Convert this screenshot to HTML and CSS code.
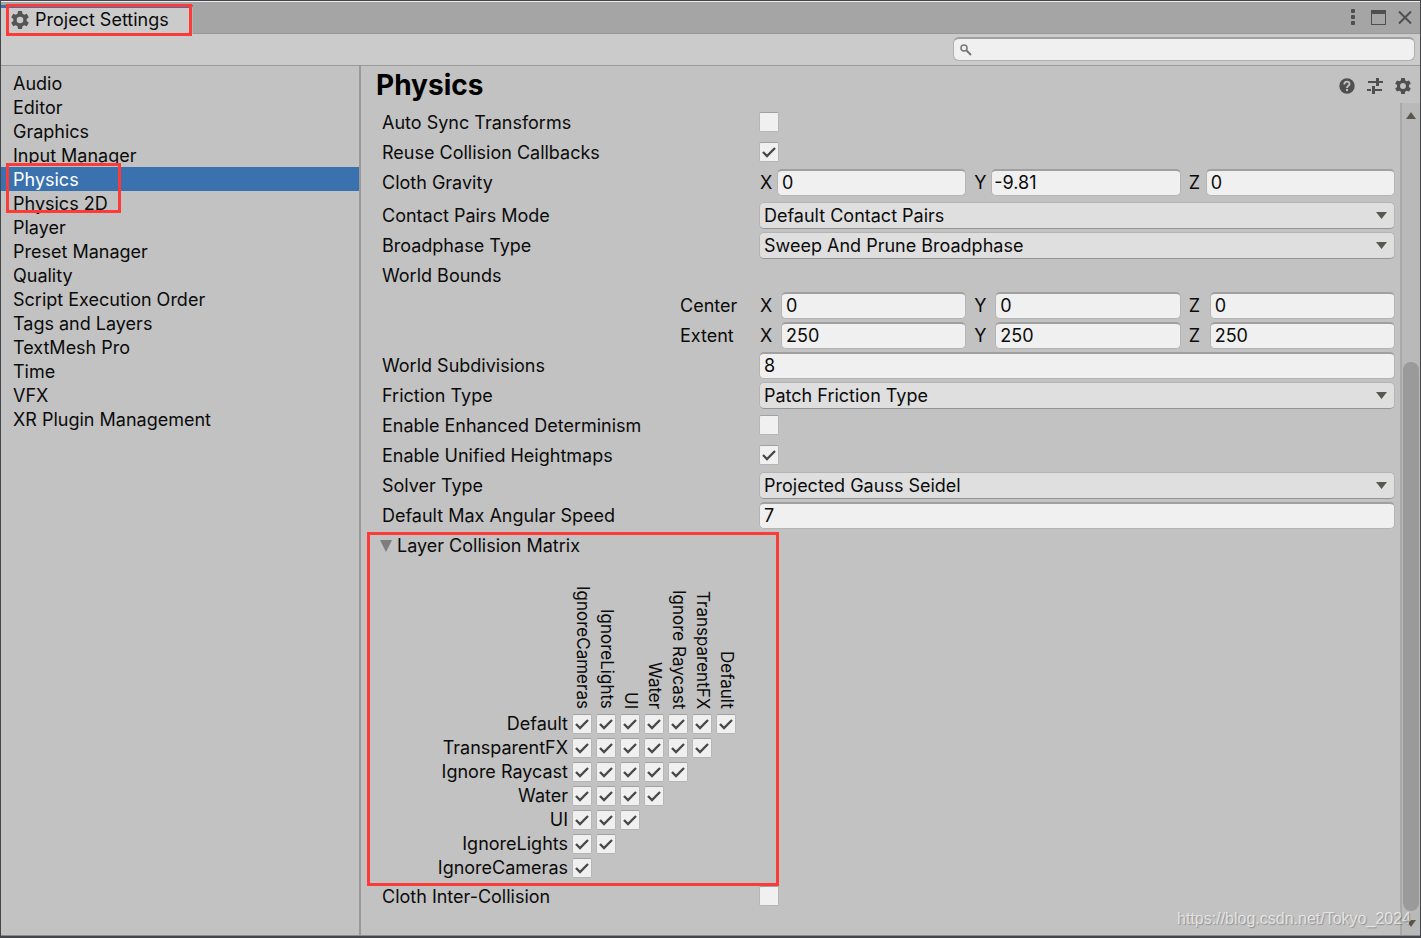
FILE: index.html
```html
<!DOCTYPE html>
<html lang="en">
<head>
<meta charset="utf-8">
<title>Project Settings</title>
<link rel="stylesheet" href="styles.css">
</head>
<body>
<svg class="defs" aria-hidden="true">
  <symbol id="gear" viewBox="0 0 18 18">
    <path fill="currentColor" fill-rule="evenodd" d="M7 0h4l.5 2.700 1.700 1 2.600-1 2 3.500-2.100 1.800v2l2.100 1.800-2 3.500-2.600-1-1.700 1L11 18H7l-.5-2.700-1.700-1-2.600 1-2-3.500L2.300 10V8L.2 6.200l2-3.500 2.600 1 1.700-1zM9 5.700a3.300 3.300 0 1 0 0 6.600 3.300 3.300 0 0 0 0-6.600z"/>
  </symbol>
</svg>
<div class="window">
  <header class="tabbar">
    <div class="tab">
      <svg class="tab-icon" aria-hidden="true"><use href="#gear"/></svg>
      <span>Project Settings</span>
      <i class="mark mark-tab"></i>
    </div>
    <div class="window-buttons">
      <button class="icon-button" aria-label="Menu"><svg width="16" height="16" viewBox="0 0 16 16"><g fill="currentColor"><rect x="6" y="0" width="4" height="4" rx="1"/><rect x="6" y="6" width="4" height="4" rx="1"/><rect x="6" y="12" width="4" height="4" rx="1"/></g></svg></button>
      <button class="icon-button" aria-label="Maximize"><svg width="16" height="16" viewBox="0 0 16 16"><path fill="currentColor" fill-rule="evenodd" d="M0 1h15v15H0zM1 5v10h13V5z"/></svg></button>
      <button class="icon-button" aria-label="Close"><svg width="16" height="16" viewBox="0 0 16 16"><path fill="none" stroke="currentColor" stroke-width="2" d="M2 2.500 14 14.500M14 2.500 2 14.500"/></svg></button>
    </div>
  </header>
  <div class="toolbar">
    <label class="search">
      <svg width="12" height="12" viewBox="0 0 12 12" aria-hidden="true"><circle cx="4" cy="4" r="3" fill="none" stroke="currentColor" stroke-width="1.500"/><path stroke="currentColor" stroke-width="2" d="M6.300 6.300 11 11"/></svg>
      <input type="search" aria-label="Search settings">
    </label>
  </div>
  <div class="panes">
    <nav class="sidebar">
      <a href="#">Audio</a>
      <a href="#">Editor</a>
      <a href="#">Graphics</a>
      <a href="#">Input Manager</a>
      <a href="#" class="selected" aria-current="page">Physics<i class="mark mark-nav"></i></a>
      <a href="#">Physics 2D</a>
      <a href="#">Player</a>
      <a href="#">Preset Manager</a>
      <a href="#">Quality</a>
      <a href="#">Script Execution Order</a>
      <a href="#">Tags and Layers</a>
      <a href="#">TextMesh Pro</a>
      <a href="#">Time</a>
      <a href="#">VFX</a>
      <a href="#">XR Plugin Management</a>
    </nav>
    <main class="content">
      <div class="heading">
        <h1>Physics</h1>
        <div class="heading-buttons">
          <button class="icon-button" aria-label="Help"><svg width="16" height="16" viewBox="0 0 16 16"><circle cx="8" cy="8" r="7.700" fill="currentColor"/><path fill="none" stroke="#c2c2c2" stroke-width="1.900" d="M5.300 6.500C5.300 2.700 10.700 2.900 10.500 6.100 10.400 7.900 8 7.900 8 10"/><path fill="#c2c2c2" d="M7 11h2v2H7z"/></svg></button>
          <button class="icon-button" aria-label="Presets"><svg width="16" height="16" viewBox="0 0 16 16"><path fill="none" stroke="currentColor" stroke-width="2" d="M1 4H9M10 4H16M0 12H4M6 12H15"/><path fill="none" stroke="currentColor" stroke-width="3" d="M10.500 0v8M6.500 8v8"/></svg></button>
          <button class="icon-button" aria-label="Options"><svg width="16" height="16"><use href="#gear"/></svg></button>
        </div>
      </div>
      <div class="scroll">
        <form class="settings">
          <div class="row"><label for="autosync">Auto Sync Transforms</label><input type="checkbox" id="autosync"></div>
          <div class="row"><label for="reuse">Reuse Collision Callbacks</label><input type="checkbox" id="reuse" checked></div>
          <div class="row spaced"><span>Cloth Gravity</span>
            <div class="vector">
              <label>X<input type="text" value="0"></label>
              <label>Y<input class="tight" type="text" value="-9.81"></label>
              <label>Z<input type="text" value="0"></label>
            </div>
          </div>
          <div class="row"><label for="pairs">Contact Pairs Mode</label><select id="pairs"><option>Default Contact Pairs</option></select></div>
          <div class="row"><label for="broad">Broadphase Type</label><select id="broad"><option>Sweep And Prune Broadphase</option></select></div>
          <div class="row"><span>World Bounds</span></div>
          <div class="row"><span class="sub">Center</span>
            <div class="vector wide">
              <label>X<input type="text" value="0"></label>
              <label>Y<input type="text" value="0"></label>
              <label>Z<input type="text" value="0"></label>
            </div>
          </div>
          <div class="row"><span class="sub">Extent</span>
            <div class="vector wide">
              <label>X<input type="text" value="250"></label>
              <label>Y<input type="text" value="250"></label>
              <label>Z<input type="text" value="250"></label>
            </div>
          </div>
          <div class="row"><label for="subdiv">World Subdivisions</label><input type="text" id="subdiv" value="8"></div>
          <div class="row"><label for="friction">Friction Type</label><select id="friction"><option>Patch Friction Type</option></select></div>
          <div class="row"><label for="determinism">Enable Enhanced Determinism</label><input type="checkbox" id="determinism"></div>
          <div class="row"><label for="heightmaps">Enable Unified Heightmaps</label><input type="checkbox" id="heightmaps" checked></div>
          <div class="row"><label for="solver">Solver Type</label><select id="solver"><option>Projected Gauss Seidel</option></select></div>
          <div class="row"><label for="angular">Default Max Angular Speed</label><input type="text" id="angular" value="7"></div>
          <section class="matrix-group">
            <i class="mark mark-matrix"></i>
            <button type="button" class="foldout" aria-expanded="true"><svg width="12" height="12" viewBox="0 0 12 12" aria-hidden="true"><path fill="#7d7d7d" d="M0 0h12L6 12z"/></svg>Layer Collision Matrix</button>
            <table class="matrix">
              <thead>
                <tr><td></td><th scope="col"><span>IgnoreCameras</span></th><th scope="col"><span>IgnoreLights</span></th><th scope="col"><span>UI</span></th><th scope="col"><span>Water</span></th><th scope="col"><span>Ignore Raycast</span></th><th scope="col"><span>TransparentFX</span></th><th scope="col"><span>Default</span></th></tr>
              </thead>
              <tbody>
                <tr><th scope="row">Default</th><td><input type="checkbox" aria-label="Default / IgnoreCameras" checked></td><td><input type="checkbox" aria-label="Default / IgnoreLights" checked></td><td><input type="checkbox" aria-label="Default / UI" checked></td><td><input type="checkbox" aria-label="Default / Water" checked></td><td><input type="checkbox" aria-label="Default / Ignore Raycast" checked></td><td><input type="checkbox" aria-label="Default / TransparentFX" checked></td><td><input type="checkbox" aria-label="Default / Default" checked></td></tr>
                <tr><th scope="row">TransparentFX</th><td><input type="checkbox" aria-label="TransparentFX / IgnoreCameras" checked></td><td><input type="checkbox" aria-label="TransparentFX / IgnoreLights" checked></td><td><input type="checkbox" aria-label="TransparentFX / UI" checked></td><td><input type="checkbox" aria-label="TransparentFX / Water" checked></td><td><input type="checkbox" aria-label="TransparentFX / Ignore Raycast" checked></td><td><input type="checkbox" aria-label="TransparentFX / TransparentFX" checked></td></tr>
                <tr><th scope="row">Ignore Raycast</th><td><input type="checkbox" aria-label="Ignore Raycast / IgnoreCameras" checked></td><td><input type="checkbox" aria-label="Ignore Raycast / IgnoreLights" checked></td><td><input type="checkbox" aria-label="Ignore Raycast / UI" checked></td><td><input type="checkbox" aria-label="Ignore Raycast / Water" checked></td><td><input type="checkbox" aria-label="Ignore Raycast / Ignore Raycast" checked></td></tr>
                <tr><th scope="row">Water</th><td><input type="checkbox" aria-label="Water / IgnoreCameras" checked></td><td><input type="checkbox" aria-label="Water / IgnoreLights" checked></td><td><input type="checkbox" aria-label="Water / UI" checked></td><td><input type="checkbox" aria-label="Water / Water" checked></td></tr>
                <tr><th scope="row">UI</th><td><input type="checkbox" aria-label="UI / IgnoreCameras" checked></td><td><input type="checkbox" aria-label="UI / IgnoreLights" checked></td><td><input type="checkbox" aria-label="UI / UI" checked></td></tr>
                <tr><th scope="row">IgnoreLights</th><td><input type="checkbox" aria-label="IgnoreLights / IgnoreCameras" checked></td><td><input type="checkbox" aria-label="IgnoreLights / IgnoreLights" checked></td></tr>
                <tr><th scope="row">IgnoreCameras</th><td><input type="checkbox" aria-label="IgnoreCameras / IgnoreCameras" checked></td></tr>
              </tbody>
            </table>
          </section>
          <div class="row"><label for="inter">Cloth Inter-Collision</label><input type="checkbox" id="inter"></div>
        </form>
        <div class="scrollbar">
          <button class="arrow" aria-label="Scroll up"><svg width="10" height="7" viewBox="0 0 10 7"><path fill="#585850" d="M5 0l5 7H0z"/></svg></button>
          <div class="track"><div class="thumb"></div></div>
          <button class="arrow" aria-label="Scroll down"><svg width="10" height="7" viewBox="0 0 10 7"><path fill="#585850" d="M0 0h10L5 7z"/></svg></button>
        </div>
      </div>
    </main>
  </div>
</div>
<div class="watermark">https://blog.csdn.net/Tokyo_2024</div>
</body>
</html>
```
FILE: styles.css
```css
* { box-sizing: border-box; }

body {
  margin: 0;
  height: 100vh;
  padding: 1px 1px 2px;
  background: #45464b;
  color: #0b0b0b;
  font: 18px/24px Inter, "Liberation Sans", sans-serif;
}

button, input, select { font: inherit; color: inherit; margin: 0; }
.defs { position: absolute; width: 0; height: 0; }

.window {
  display: flex;
  flex-direction: column;
  height: 100%;
  border-top: 1px solid #ececec;
  border-bottom: 1px solid #8a8a8a;
  background: #c2c2c2;
}

/* Title tabs */
.tabbar {
  display: flex;
  justify-content: space-between;
  align-items: flex-end;
  height: 32px;
  flex: none;
  background: #a5a5a5;
  box-shadow: inset 0 -1px #999;
}
.tab {
  position: relative;
  display: flex;
  align-items: center;
  gap: 6px;
  height: 29px;
  padding: 0 20px 2px 10px;
  width: 192px;
  white-space: nowrap;
  background: #cbcbcb;
  border-top: 3px solid #3a72b0;
  border-right: 1px solid #b4b4b4;
}
.tab-icon { width: 18px; height: 18px; flex: none; color: #555; }
.window-buttons { display: flex; align-items: center; align-self: stretch; gap: 10px; padding: 0 7px 2px 0; }
.icon-button {
  display: block;
  padding: 0;
  width: 16px;
  height: 16px;
  border: 0;
  background: none;
  color: #4f4f4f;
}
.icon-button svg { display: block; }

.toolbar {
  display: flex;
  justify-content: flex-end;
  align-items: center;
  flex: none;
  height: 32px;
  padding: 0 5px 1px 0;
  background: #cbcbcb;
  border-bottom: 1px solid #999;
}
.search {
  display: flex;
  align-items: center;
  gap: 6px;
  width: 462px;
  height: 24px;
  padding: 0 6px;
  border: 1px solid #b0b0b0;
  border-top: 2px solid #a0a0a0;
  border-radius: 6px;
  background: #f0f0f0;
  color: #777;
}
.search input { flex: 1; min-width: 0; height: 20px; padding: 0; border: 0; background: none; outline: 0; }

/* Panes */
.panes { display: flex; flex: 1; min-height: 0; }
.sidebar {
  width: 360px;
  flex: none;
  padding-top: 5px;
  border-right: 2px solid #999;
}
.sidebar a {
  display: block;
  height: 24px;
  padding-left: 12px;
  line-height: 26px;
  color: inherit;
  text-decoration: none;
  position: relative;
}
.sidebar .selected { background: #3a72b0; color: #fff; z-index: 1; }

.content { display: flex; flex-direction: column; flex: 1; min-width: 0; }
.heading {
  display: flex;
  align-items: center;
  justify-content: space-between;
  flex: none;
  height: 37px;
  padding: 0 9px 0 15px;
}
h1 { margin: 0; font-size: 28px; line-height: 34px; font-weight: 700; color: #000; }
.heading-buttons { display: flex; gap: 12px; padding-top: 2px; }

.scroll { display: flex; flex: 1; min-height: 0; }
.settings {
  display: flex;
  flex-direction: column;
  gap: 3px;
  flex: 1;
  min-width: 0;
  padding: 6px 5px 0 21px;
}
.row {
  display: grid;
  grid-template-columns: 377px 1fr;
  align-items: center;
  height: 27px;
  flex: none;
}
.spaced { margin-bottom: 3px; }
.sub { padding-left: 298px; }

input[type="text"], select {
  width: 100%;
  min-width: 0;
  height: 27px;
  padding: 0 4px;
  border: 1px solid #b4b4b4;
  border-radius: 5px;
  outline: 0;
}
input[type="text"] { background: #f0f0f0; border-top: 2px solid #a0a0a0; padding-bottom: 1px; }
input.tight { padding-left: 2px; }
select {
  appearance: none;
  background: #dfdfdf url("data:image/svg+xml,%3Csvg xmlns='http://www.w3.org/2000/svg' width='11' height='7'%3E%3Cpath fill='%23585850' d='M0 0h11L5.500 7z'/%3E%3C/svg%3E") no-repeat right 7px center;
  border-bottom-color: #949494;
}
input[type="checkbox"] {
  appearance: none;
  display: block;
  width: 20px;
  height: 20px;
  border: 1px solid #b6b6b6;
  border-top-color: #a0a0a0;
  border-radius: 2px;
  background: #f0f0f0;
}
input[type="checkbox"]:checked {
  background: #f0f0f0 url("data:image/svg+xml,%3Csvg xmlns='http://www.w3.org/2000/svg' width='14' height='12'%3E%3Cpath fill='none' stroke='%23484848' stroke-width='2.300' d='M1 6l4 4 8-8'/%3E%3C/svg%3E") no-repeat center;
}
.row > input[type="checkbox"] { margin-bottom: 1px; }

.vector { display: grid; grid-template-columns: repeat(3, minmax(0, 1fr)); gap: 7px; }
.vector label { display: grid; grid-template-columns: 18px 1fr; align-items: center; text-indent: 1px; }
.vector input { text-indent: 0; }
.wide label { grid-template-columns: 22px 1fr; }

/* Layer matrix */
.matrix-group { position: relative; }
.foldout {
  display: flex;
  align-items: center;
  gap: 5px;
  height: 27px;
  padding: 0;
  margin-left: -2px;
  border: 0;
  background: none;
}
.matrix { border-collapse: collapse; table-layout: fixed; width: 358px; }
.matrix th, .matrix td { padding: 0; font-weight: 400; }
.matrix td:first-child { width: 190px; }
.matrix tr { height: 24px; }
.matrix thead tr { height: 153px; }
.matrix thead th { vertical-align: bottom; width: 24px; padding-bottom: 3px; }
.matrix thead span { display: block; writing-mode: vertical-rl; font-size: 17px; line-height: 22px; white-space: nowrap; }
.matrix tbody th { text-align: right; padding-right: 4px; line-height: 24px; white-space: nowrap; }

/* Scrollbar */
.scrollbar {
  display: flex;
  flex-direction: column;
  width: 20px;
  flex: none;
  background: #b9b9b9;
  border-left: 2px solid #a9a9a9;
  padding-right: 1px;
}
.arrow { display: grid; place-items: center; height: 24px; padding: 0; border: 0; background: none; flex: none; }
.track { display: flex; flex-direction: column; justify-content: flex-end; flex: 1; padding-left: 1px; }
.thumb { height: 70%; border-radius: 8px; background: #9a9a9a; }

/* Red call-out frames */
.mark { position: absolute; border: 3px solid #fc3a38; pointer-events: none; }
.mark-tab { top: -4px; left: 5px; width: 186px; height: 32px; }
.mark-nav { top: -4px; left: 5px; width: 115px; height: 50px; }
.mark-matrix { top: 0; bottom: -6px; left: -15px; width: 412px; }

.watermark {
  position: absolute;
  right: 10px;
  bottom: 8px;
  font: 16px/22px "Liberation Sans", sans-serif;
  color: rgba(255, 255, 255, .65);
  text-shadow: 1px 1px 1px rgba(0, 0, 0, .25);
}
```
